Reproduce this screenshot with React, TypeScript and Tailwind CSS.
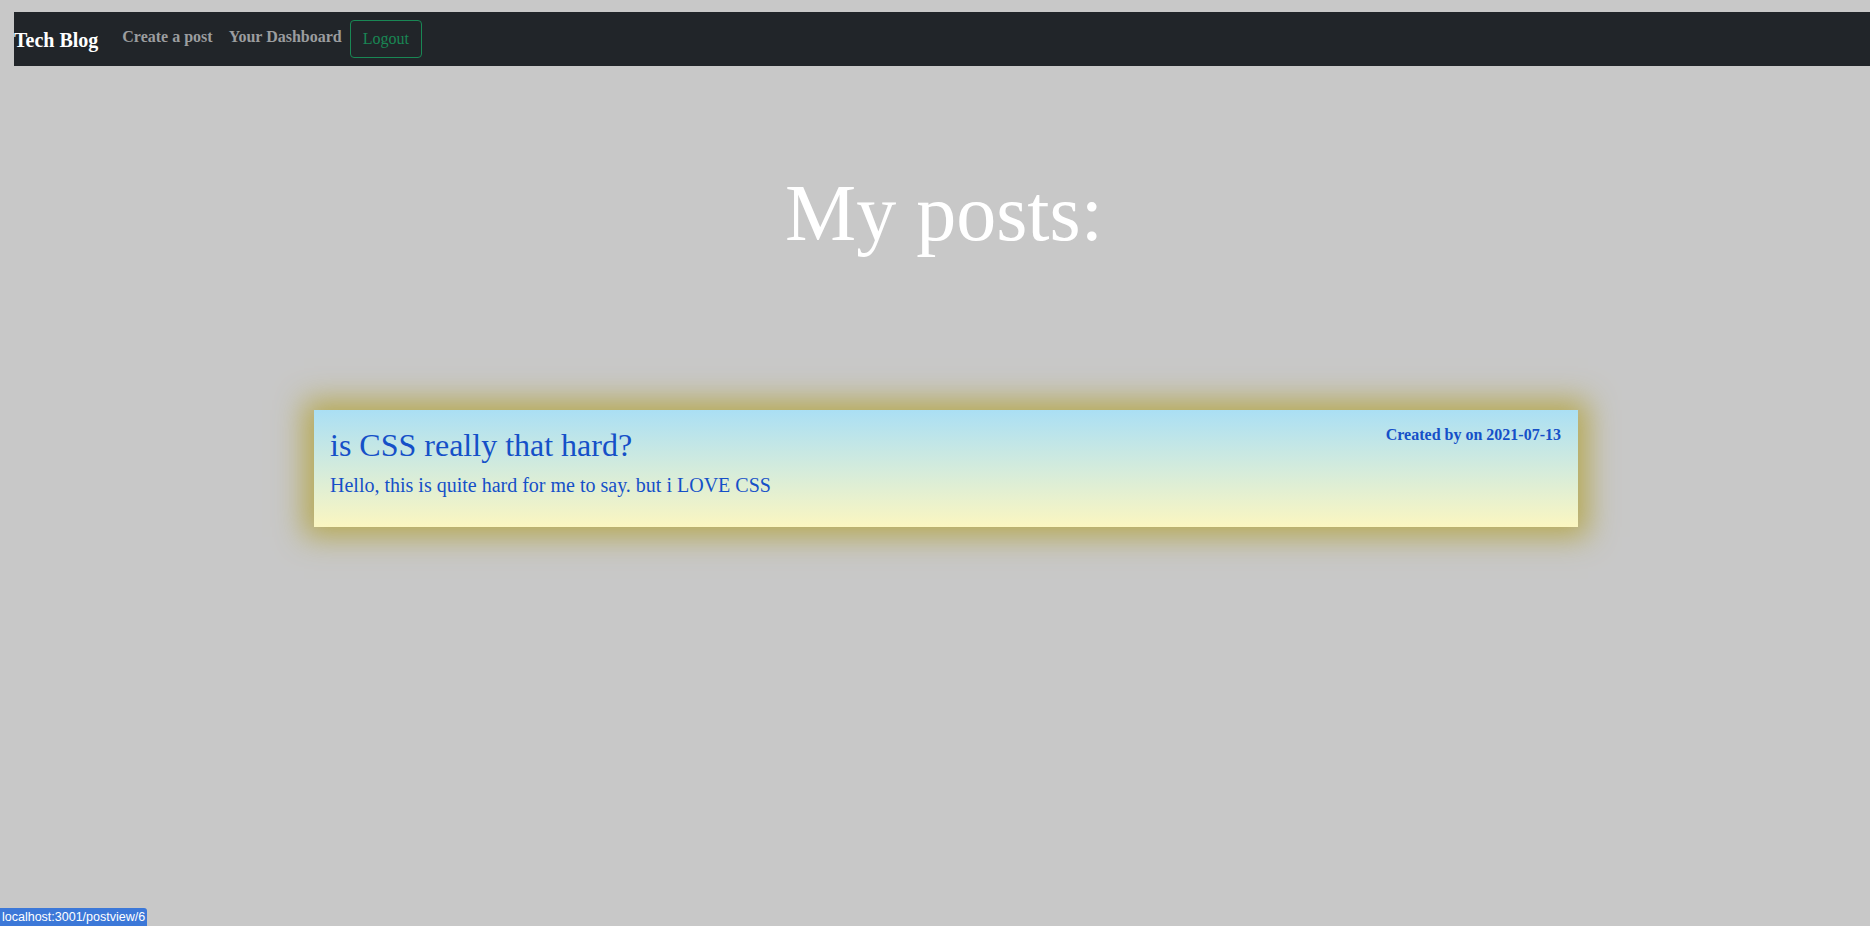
import React from "react";

const Navbar = () => {
  return (
    <nav className="ml-[14px] mt-[12px] h-[54px] bg-[#212529] flex items-center">
      <a className="text-white font-bold text-[20px] mr-[16px] leading-[30px] pt-[2px]">Tech Blog</a>
      <a className="text-[#9b9d9f] font-bold text-[16px] px-[8px] pb-[4px]">Create a post</a>
      <a className="text-[#9b9d9f] font-bold text-[16px] px-[8px] pb-[4px]">Your Dashboard</a>
      <button className="h-[38px] px-[12px] border border-[#198754] rounded-[4px] text-[#198754] text-[16px]">
        Logout
      </button>
    </nav>
  );
};

const PostCard = () => {
  return (
    <div className="relative ml-[314px] w-[1264px] h-[117px] bg-gradient-to-b from-[#aadff4] to-[#fbf6c0] shadow-[0_0_28px_10px_#b6a953] px-[16px] pt-[14px] text-[#1550c8]">
      <div className="absolute top-[13px] right-[17px] font-bold text-[16px]">Created by on 2021-07-13</div>
      <h2 className="text-[32px] leading-[42px]">is CSS really that hard?</h2>
      <p className="text-[20px] mt-[4px]">Hello, this is quite hard for me to say. but i LOVE CSS</p>
    </div>
  );
};

const App = () => {
  return (
    <div className="relative min-h-[926px] bg-[#c8c8c8] font-['Liberation_Serif',serif] overflow-hidden">
      <Navbar />
      {/* Header */}
      <h1 className="text-center text-white text-[80px] leading-[98px] mt-[98px] pl-[18px]">My posts:</h1>
      <div className="mt-[148px]">
        <PostCard />
      </div>
      {/* browser status bubble */}
      <div className="fixed left-0 bottom-0 h-[18px] px-[2px] bg-[#3c78d8] rounded-tr-[3px] text-white text-[12.5px] leading-[18px] font-['Liberation_Sans',sans-serif]">
        localhost:3001/postview/6
      </div>
    </div>
  );
};

export default App;
